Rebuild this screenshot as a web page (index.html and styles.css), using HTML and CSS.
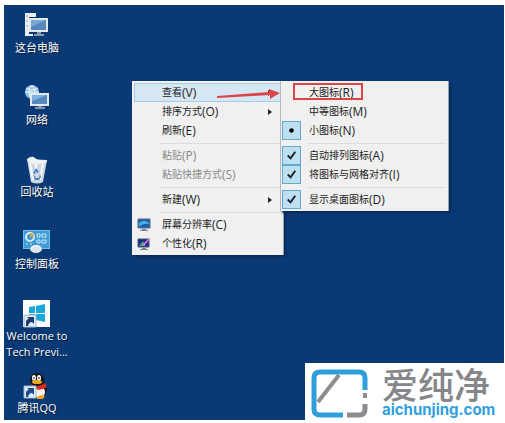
FILE: index.html
```html
<!DOCTYPE html>
<html lang="zh-CN">
<head>
  <meta charset="UTF-8" />
  <meta name="viewport" content="width=device-width, initial-scale=1.0"/>
  <title>桌面</title>
  <link rel="stylesheet" href="styles.css">
</head>
<body>
  <main class="desktop">
    <nav class="icons">
      <a class="icon" href="#">
        <svg viewBox="0 0 28 28">
          <path d="M2 1h11v4H6v4h3v3H6v10h4v2H2z" fill="#e9eef2"/>
          <path d="M3 4h2M3 9h2M3 14h2" stroke="#8ea3b6"/>
          <rect x="6" y="6" width="19" height="14" fill="#e3e8ec"/>
          <rect x="8" y="8" width="15" height="10" fill="#5588bd"/>
          <path d="M8 8h15l-15 7z" fill="#7aa8d5"/>
          <path d="M14 20h4v2h3v2H11v-2h3z" fill="#8a98a8"/>
        </svg>
        <span>这台电脑</span>
      </a>
      <a class="icon" href="#">
        <svg viewBox="0 0 28 28">
          <circle cx="9" cy="8" r="7" fill="#8fc3e8"/>
          <path d="M3 4q6 4 12 0M2 8h14M9 1q-6 7 0 14M9 1q5 6 1 13" fill="none" stroke="#eef6fb"/>
          <rect x="7" y="9" width="19" height="13" fill="#e3e8ec"/>
          <rect x="9" y="11" width="15" height="9" fill="#5588bd"/>
          <path d="M9 11h15L9 17z" fill="#7fb2df"/>
          <path d="M15 22h4v1h3v2H12v-2h3z" fill="#8a98a8"/>
        </svg>
        <span>网络</span>
      </a>
      <a class="icon" href="#">
        <svg viewBox="0 0 28 28">
          <path d="M4 3l20 1-4 22q-6 3-12 0z" fill="#cfd8e0"/>
          <path d="M4 3q5-4 8-1t12 2l-1 3q-10 3-18-1z" fill="#eef2f5"/>
          <path d="M7 7l3 17M20 8l-3 16M13 8v5" stroke="#f6f8fa" stroke-width="2"/>
          <path d="M10 17l3-5 3 4-2 1-1-2-1 3zM10 18l3 4h3l1-4 1 3-2 3h-4z" fill="#4d7fc4"/>
        </svg>
        <span>回收站</span>
      </a>
      <a class="icon" href="#">
        <svg viewBox="0 0 28 28">
          <rect x="0" y="2" width="27" height="19" fill="#6fbde8"/>
          <rect x="1" y="3" width="25" height="17" fill="#3d9bd6"/>
          <circle cx="7" cy="9" r="4" fill="none" stroke="#dcecf5" stroke-width="2"/>
          <path d="M7 5v4h4a4 4 0 0 0-4-4" fill="#d9a640"/>
          <path d="M3 16h2M7 16h2M14 6h3v3h-3zM19 6h4v3h-4zM14 12h3v3h-3zM19 12h4v3h-4z" fill="none" stroke="#c9e7f7"/>
          <ellipse cx="13" cy="21" rx="6" ry="4" fill="#dfe5ea"/>
          <path d="M8 20q5-4 9-1" fill="none" stroke="#fff"/>
        </svg>
        <span>控制面板</span>
      </a>
      <a class="icon" href="#">
        <svg viewBox="0 0 28 28">
          <path d="M0 0h27v27H0z" fill="#fff"/>
          <path d="M6 7l6-1v7H6zM13 6l9-2v9h-9zM6 14h6v6l-6-1zM13 14h9v8l-9-2z" fill="#19a8dc"/>
          <path d="M1 15h12v12H1z" fill="#e4eef8" stroke="#9cb6d0"/>
          <path d="M3 26V22q0-3 3-3l-2-2h7v7l-2-2q-3 0-4 4z" fill="#1d3a6c"/>
        </svg>
        <span>Welcome to Tech Previ...</span>
      </a>
      <a class="icon" href="#">
        <svg viewBox="0 0 28 28">
          <ellipse cx="16" cy="17" rx="8" ry="9" fill="#17171b"/>
          <ellipse cx="16" cy="20" rx="6" ry="6" fill="#f5f2ee"/>
          <ellipse cx="14" cy="8" rx="7" ry="7" fill="#17171b"/>
          <ellipse cx="11" cy="6" rx="2" ry="3" fill="#fff"/>
          <ellipse cx="16" cy="6" rx="2" ry="3" fill="#fff"/>
          <path d="M11 5v2M16 5v2" stroke="#111"/>
          <ellipse cx="14" cy="10" rx="5" ry="2" fill="#f2a91c"/>
          <path d="M7 12q8 5 15-1l2 4q-7 4-11 2z" fill="#dc2a22"/>
          <path d="M14 25q4-3 8-1l-2 3h-6z" fill="#f0a122"/>
          <path d="M1 14h12v12H1z" fill="#e4eef8" stroke="#9cb6d0"/>
          <path d="M3 25V21q0-3 3-3l-2-2h7v7l-2-2q-3 0-4 4z" fill="#1d4a8c"/>
        </svg>
        <span>腾讯QQ</span>
      </a>
    </nav>

    <div class="menu context" role="menu">
      <button class="row open" role="menuitem">查看<span class="key">(V)</span><i class="more"></i></button>
      <button class="row" role="menuitem">排序方式<span class="key">(O)</span><i class="more"></i></button>
      <button class="row" role="menuitem">刷新<span class="key">(E)</span></button>
      <hr>
      <button class="row" role="menuitem" disabled>粘贴<span class="key">(P)</span></button>
      <button class="row" role="menuitem" disabled>粘贴快捷方式<span class="key">(S)</span></button>
      <hr>
      <button class="row" role="menuitem">新建<span class="key">(W)</span><i class="more"></i></button>
      <hr>
      <button class="row" role="menuitem">
        <svg class="pic" viewBox="0 0 14 14">
          <path d="M1 1h12v9H1z" fill="#1c5fae" stroke="#5a6b80"/>
          <path d="M2 9V5q5-4 10 0v1q-6-1-10 3z" fill="#49b2e6"/>
          <path d="M5 11h4v1h2v1H3v-1h2z" fill="#7b8794"/>
        </svg>
        屏幕分辨率<span class="key">(C)</span>
      </button>
      <button class="row" role="menuitem">
        <svg class="pic" viewBox="0 0 14 14">
          <path d="M1 2h11v8H1z" fill="#1d2a8c" stroke="#4a5470"/>
          <path d="M2 9l4-5 2 5z" fill="#3fb264"/>
          <path d="M5 8l7-7 1 1-6 7z" fill="#c878d8"/>
          <path d="M5 11h4v1h2v1H3v-1h2z" fill="#7b8794"/>
        </svg>
        个性化<span class="key">(R)</span>
      </button>

      <div class="menu submenu" role="menu">
        <button class="row marked" role="menuitemradio">大图标<span class="key">(R)</span></button>
        <button class="row" role="menuitemradio">中等图标<span class="key">(M)</span></button>
        <button class="row" role="menuitemradio" aria-checked="true">
          <svg class="tick" viewBox="0 0 18 18"><circle cx="9" cy="9" r="2.4"/></svg>
          小图标<span class="key">(N)</span>
        </button>
        <hr>
        <button class="row" role="menuitemcheckbox" aria-checked="true">
          <svg class="tick" viewBox="0 0 18 18"><path d="M5 9l3 3 5-7"/></svg>
          自动排列图标<span class="key">(A)</span>
        </button>
        <button class="row" role="menuitemcheckbox" aria-checked="true">
          <svg class="tick" viewBox="0 0 18 18"><path d="M5 9l3 3 5-7"/></svg>
          将图标与网格对齐<span class="key">(I)</span>
        </button>
        <hr>
        <button class="row" role="menuitemcheckbox" aria-checked="true">
          <svg class="tick" viewBox="0 0 18 18"><path d="M5 9l3 3 5-7"/></svg>
          显示桌面图标<span class="key">(D)</span>
        </button>
      </div>

      <svg class="arrow" viewBox="0 0 64 12">
        <path d="M0 8L52 4V1l11 4-10 6V7L0 10z" fill="#dc4448"/>
      </svg>
    </div>
  </main>

  <a class="brand" href="#">
    <svg viewBox="0 0 57 49">
      <path d="M54 21V9q0-6-6-6H9Q3 3 3 9v31q0 6 6 6h23" fill="none" stroke="#2f9fdc" stroke-width="5"/>
      <path d="M7 33L28 6" stroke="#8b8d90" stroke-width="4"/>
      <path d="M52 24h4v5h-4z" fill="#8b8d90"/>
      <path d="M54 35v5q0 6-6 6H36" fill="none" stroke="#8b8d90" stroke-width="5"/>
    </svg>
    <span class="brand-text">
      <span class="brand-name">爱纯净</span>
      <span class="brand-url">aichunjing.com</span>
    </span>
  </a>
</body>
</html>
```
FILE: styles.css
```css
*,
*::after {
  box-sizing: border-box;
}

body {
  margin: 0;
  padding: 5px 1px 3px 4px;
  min-height: 100vh;
  display: flex;
  background-color: white;
  font-family: "Open Sans", "Noto Sans CJK SC", sans-serif;
  font-size: 10px;
}

.desktop {
  position: relative;
  flex: 1;
  padding-top: 7px;
  background-color: #0a3a76;
}

.icons {
  display: grid;
  grid-template-rows: repeat(5, 72px);
  width: 66px;
}

.icon {
  display: flex;
  flex-direction: column;
  align-items: center;
  color: white;
  line-height: 16px;
  font-size: 11px;
  text-align: center;
  text-decoration: none;
  text-shadow: 1px 1px 1px #04162f;
}

.icon svg {
  width: 28px;
  height: 28px;
  flex-shrink: 0;
}

.menu {
  position: absolute;
  padding: 2px;
  background-color: #f0f0f0;
  border-right: 1px solid #9aa3ae;
  box-shadow: 2px 2px 2px #082b58;
}

.context {
  left: 128px;
  top: 76px;
  width: 152px;
}

.submenu {
  left: 148px;
  top: 0;
  width: 169px;
  border-left: 1px solid #b4b8bd;
}

.row {
  position: relative;
  display: flex;
  align-items: center;
  width: 100%;
  height: 19px;
  padding: 0 8px 0 27px;
  border: 1px solid transparent;
  background: none;
  color: #1c1c1c;
  font-family: inherit;
  font-size: 10px;
  line-height: 17px;
  white-space: nowrap;
}

.submenu .row {
  padding-left: 25px;
}

.row:disabled {
  color: #8a8a8a;
}

.row.open {
  background-color: #d5e6f4;
  border-color: #a9cbe6;
}

.key {
  font-size: 12px;
}

.more {
  margin-left: auto;
  border: 3px solid transparent;
  border-left: 4px solid #222;
  border-right: 0;
}

.pic {
  position: absolute;
  left: 2px;
  width: 14px;
  height: 14px;
}

.tick {
  position: absolute;
  left: -2px;
  width: 19px;
  height: 19px;
  background-color: #bde0f0;
  border: 1px solid #62a9cc;
}

.tick path {
  fill: none;
  stroke: #18222c;
  stroke-width: 2;
}

hr {
  height: 1px;
  margin: 3px 0 2px 25px;
  border: 0;
  background-color: #dcdcdc;
}

/* red frame around the entry the arrow points at */
.marked::after {
  content: "";
  position: absolute;
  left: 9px;
  top: -1px;
  width: 70px;
  height: 17px;
  border: 2px solid #dc4448;
}

.arrow {
  position: absolute;
  left: 85px;
  top: 7px;
  width: 64px;
  height: 12px;
}

.brand {
  position: absolute;
  right: 0;
  bottom: 0;
  display: flex;
  align-items: center;
  gap: 14px;
  padding: 4px 6px;
  height: 60px;
  width: 200px;
  background-color: white;
  text-decoration: none;
}

.brand svg {
  width: 57px;
  height: 49px;
  flex-shrink: 0;
}

.brand-text {
  display: flex;
  flex-direction: column;
}

.brand-name {
  color: #85878a;
  font-family: "Noto Sans CJK SC", sans-serif;
  font-size: 36px;
  font-weight: 500;
  line-height: 34px;
}

.brand-url {
  color: #2f9fdc;
  font-family: Inter, sans-serif;
  font-size: 15px;
  font-weight: bold;
  line-height: 20px;
}
```
